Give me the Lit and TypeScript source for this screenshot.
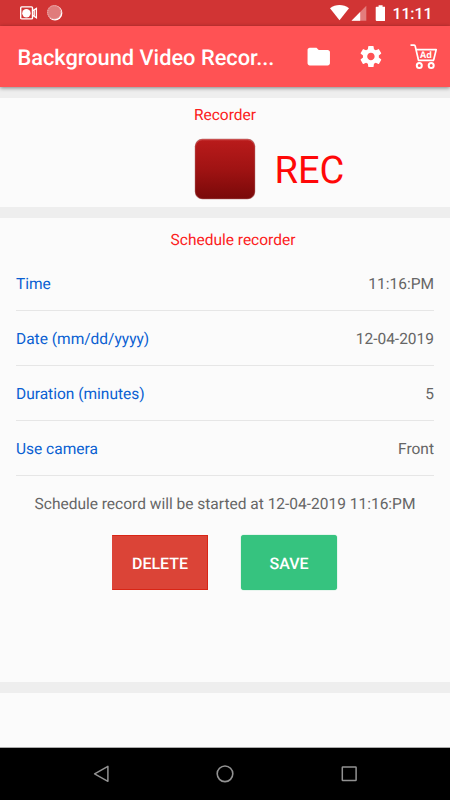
import { LitElement, html, css } from "lit";
import { customElement } from "lit/decorators.js";

const rows = [
  { label: "Time", value: "11:16:PM" },
  { label: "Date (mm/dd/yyyy)", value: "12-04-2019" },
  { label: "Duration (minutes)", value: "5" },
  { label: "Use camera", value: "Front" },
];

@customElement("app-root")
export class AppRoot extends LitElement {
  static styles = css`
    :host {
      display: flex;
      flex-direction: column;
      width: 450px;
      height: 800px;
      overflow: hidden;
      background: #fbfbfb;
      font-family: Roboto, "Liberation Sans", sans-serif;
      font-size: 15.5px;
      color: #666;
      text-rendering: geometricPrecision;
    }
    * { box-sizing: border-box; }
    svg { display: block; flex: none; }
    .status {
      height: 26px;
      flex: none;
      background: #d13434;
      display: flex;
      align-items: center;
      padding: 0 18px 0 20px;
      color: #fff;
    }
    .spacer { flex: 1; }
    .clock {
      width: 39.5px;
      font-size: 15.7px;
      line-height: 26px;
      font-weight: 500;
      padding-top: 2px;
      margin-left: 8px;
    }
    .bar {
      height: 61px;
      flex: none;
      background: #ff5254;
      display: flex;
      align-items: center;
      padding: 0 12px 0 17.4px;
      color: #fff;
      box-shadow: 0 1px 4px rgba(0, 0, 0, 0.45);
      z-index: 1;
    }
    .title {
      flex: 1;
      font-size: 21.8px;
      font-weight: 500;
      white-space: nowrap;
      line-height: 30px;
      padding-top: 5px;
    }
    .band { height: 11px; flex: none; background: #eee; }
    .recorder { height: 109px; flex: none; padding-top: 7px; }
    .heading {
      color: #fb2020;
      line-height: 20px;
      text-align: center;
    }
    .rec { display: flex; align-items: flex-start; margin-top: 13px; padding-left: 194px; }
    .rec-label { color: #ff0808; font-size: 38px; line-height: 60px; margin-left: 18.5px; padding-top: 3px; }
    .schedule { height: 464px; flex: none; padding: 12px 16px 0; }
    .schedule .heading { padding-left: 16px; }
    .rows { margin-top: 6px; }
    .row {
      height: 55px;
      display: flex;
      align-items: center;
      justify-content: space-between;
      padding-top: 3px;
      line-height: 19px;
      border-bottom: 1px solid #e6e6e6;
    }
    .label { color: #0a5fd2; }
    .note { text-align: center; line-height: 20px; margin-top: 18px; white-space: nowrap; }
    .actions { display: flex; gap: 33px; padding-left: 96px; margin-top: 21px; }
    .btn {
      width: 96px;
      height: 55px;
      display: flex;
      align-items: center;
      justify-content: center;
      padding-top: 2px;
      font-size: 16px;
      font-weight: 500;
      color: #fff;
    }
    .delete { background: #db4437; border: 1px solid #d92515; border-left-color: #db4437; }
    .save { background: #36c37f; border-radius: 3px; box-shadow: 0 0 1px #36c37f; }
    .blank { flex: 1; border-bottom: 1px solid #aaa; }
    .nav {
      height: 52px;
      flex: none;
      background: #000;
      display: flex;
      align-items: center;
      justify-content: center;
      gap: 100px;
    }
  `;

  render() {
    return html`
      <div class="status">
        <svg width="44" height="26" viewBox="0 0 44 26">
          <rect x="0.700" y="6.900" width="11.800" height="12" rx="1" fill="none" stroke="#fff" stroke-width="1.400" />
          <circle cx="6.400" cy="13.200" r="4.200" fill="#fff" />
          <path d="M12.500 10.800L16.400 8.400V17.800L12.500 15.200M14.200 9.800V16.400" fill="none" stroke="#fff" stroke-width="1.300" />
          <circle cx="35" cy="13" r="7.400" fill="#fff" />
          <circle cx="34.100" cy="12.200" r="7.100" fill="#e07b7b" />
          <circle cx="34.300" cy="12.300" r="6.600" fill="none" stroke="#f0b8b8" stroke-width="1" stroke-dasharray="1 1" />
        </svg>
        <div class="spacer"></div>
        <svg width="56" height="26" viewBox="329 0 56 26">
          <path d="M330 8.300C335.500 4 343.500 4 349 8.300L339.500 20.300Z" fill="#fff" />
          <path d="M366.300 5.800V20.700H351.500Z" fill="#e37c7c" />
          <path d="M360.200 12V20.700H351.500Z" fill="#fff" />
          <path d="M378.600 5.200h4v1.500h2.100q.8 0 .8.800v12.600q0 .8-.8.800h-8.200q-.8 0-.8-.8V7.500q0-.8.800-.8h2.100z" fill="#fff" />
        </svg>
        <div class="clock">11:11</div>
      </div>

      <div class="bar">
        <div class="title">Background Video Recor...</div>
        <svg width="133" height="61" viewBox="305 26 133 61" fill="#fff">
          <path transform="translate(305.300 43.200) scale(1.120)" d="M10 4H4c-1.100 0-1.990.9-1.990 2L2 18c0 1.100.9 2 2 2h16c1.100 0 2-.9 2-2V8c0-1.100-.9-2-2-2h-8l-2-2z" />
          <path transform="translate(358.200 43.800) scale(1.060)" d="M19.430 12.980c.04-.32.07-.64.07-.98s-.03-.66-.07-.98l2.110-1.650c.19-.15.24-.42.12-.64l-2-3.460c-.12-.22-.39-.3-.61-.22l-2.490 1c-.52-.4-1.080-.73-1.690-.98l-.38-2.650C14.460 2.180 14.250 2 14 2h-4c-.25 0-.46.18-.49.42l-.38 2.650c-.61.25-1.170.59-1.690.98l-2.490-1c-.23-.09-.49 0-.61.22l-2 3.460c-.13.22-.07.49.12.64l2.110 1.650c-.04.32-.07.65-.07.98s.03.66.07.98l-2.110 1.650c-.19.15-.24.42-.12.64l2 3.460c.12.22.39.3.61.22l2.490-1c.52.4 1.080.73 1.690.98l.38 2.650c.03.24.24.42.49.42h4c.25 0 .46-.18.49-.42l.38-2.650c.61-.25 1.170-.59 1.690-.98l2.490 1c.23.09.49 0 .61-.22l2-3.460c.12-.22.07-.49-.12-.64l-2.110-1.650zM12 15.500c-1.930 0-3.500-1.570-3.500-3.500s1.570-3.500 3.500-3.500 3.500 1.570 3.500 3.500-1.570 3.500-3.500 3.500z" />
          <g fill="none" stroke="#fff" stroke-width="1.700" stroke-linejoin="round">
            <path d="M410.500 45.200H414.200Q415 45.200 415.200 46.100L418.500 60.300H434" />
            <path d="M415.900 49.600H436.200L433.600 60.300" />
            <circle cx="419.300" cy="65.600" r="2.500" stroke-width="2" />
            <circle cx="431.200" cy="65.600" r="2.500" stroke-width="2" />
          </g>
          <text x="425.900" y="58.400" text-anchor="middle" font-family="Open Sans, sans-serif" font-size="9" font-weight="700">Ad</text>
        </svg>
      </div>

      <div class="band"></div>
      <div class="recorder">
        <div class="heading">Recorder</div>
        <div class="rec">
          <svg width="62" height="62" viewBox="0 0 62 62">
            <defs>
              <linearGradient id="g" x1="0" y1="0" x2="0" y2="1">
                <stop offset="0" stop-color="#b91b1b" />
                <stop offset="0.500" stop-color="#a01313" />
                <stop offset="1" stop-color="#7a0909" />
              </linearGradient>
              <linearGradient id="h" x1="0" y1="0" x2="0" y2="1">
                <stop offset="0" stop-color="#d04a4a" />
                <stop offset="0.120" stop-color="#b52020" />
                <stop offset="1" stop-color="#7d0b0b" />
              </linearGradient>
            </defs>
            <rect x="0.800" y="0.800" width="60.400" height="60.400" rx="7.500" fill="#8d2020" fill-opacity=".65" />
            <rect x="1.800" y="1.800" width="58.400" height="58.400" rx="6.500" fill="url(#g)" stroke="url(#h)" stroke-width="1" />
          </svg>
          <div class="rec-label">REC</div>
        </div>
      </div>
      <div class="band"></div>
      <div class="schedule">
        <div class="heading">Schedule recorder</div>
        <div class="rows">
          ${rows.map(
            (r) => html`<div class="row"><span class="label">${r.label}</span><span>${r.value}</span></div>`
          )}
        </div>
        <div class="note">Schedule record will be started at 12-04-2019 11:16:PM</div>
        <div class="actions">
          <div class="btn delete">DELETE</div>
          <div class="btn save">SAVE</div>
        </div>
      </div>
      <div class="band"></div>
      <div class="blank"></div>
      <div class="nav">
        <svg width="24" height="24" viewBox="0 0 24 24" fill="none" stroke="#929292" stroke-width="1.500">
          <path d="M18.900 4.300V19.300L5.600 11.800Z" stroke-linejoin="round" />
        </svg>
        <svg width="24" height="24" viewBox="0 0 24 24" fill="none" stroke="#929292" stroke-width="1.600">
          <circle cx="12" cy="11.800" r="7.800" />
        </svg>
        <svg width="24" height="24" viewBox="0 0 24 24" fill="none" stroke="#929292" stroke-width="1.500">
          <rect x="5.300" y="5" width="13.800" height="13.600" rx="0.600" />
        </svg>
      </div>
    `;
  }
}
